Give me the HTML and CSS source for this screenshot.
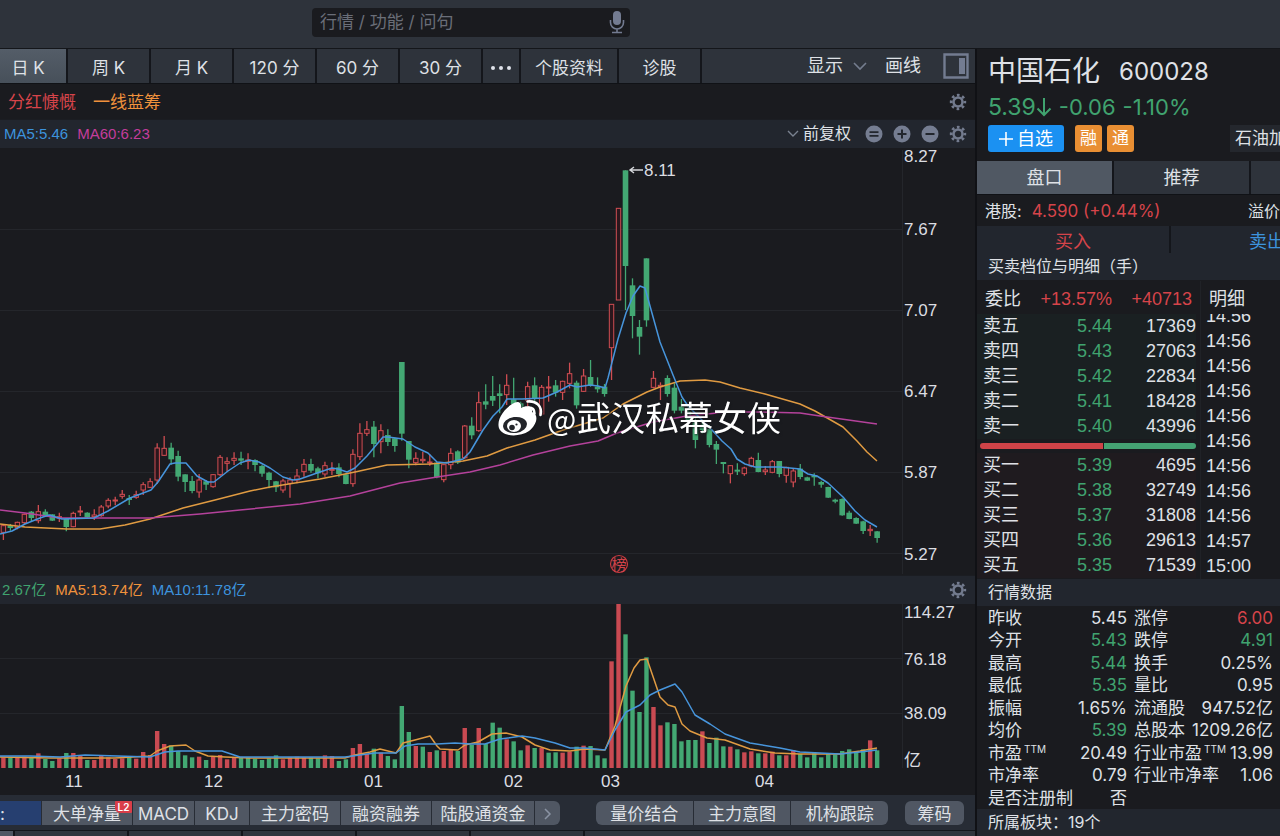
FILE: index.html
```html
<!DOCTYPE html>
<html lang="zh-CN">
<head>
<meta charset="utf-8">
<title>中国石化 600028</title>
<link rel="stylesheet" href="styles.css">
</head>
<body>
<svg class="defs" width="0" height="0" aria-hidden="true">
  <symbol id="gear" viewBox="0 0 20 20">
    <circle cx="10" cy="10" r="5" fill="none" stroke="currentColor" stroke-width="2.8"/>
    <circle cx="10" cy="10" r="7.6" fill="none" stroke="currentColor" stroke-width="3" stroke-dasharray="2.9 3.07" stroke-dashoffset="1.45"/>
  </symbol>
</svg>
<header class="topbar">
  <label class="search">
    <input type="text" placeholder="行情 / 功能 / 问句" aria-label="搜索">
    <svg class="mic" viewBox="0 0 16 24" aria-hidden="true"><rect x="4" y="1" width="8" height="14" rx="4" fill="#737b91"/><path d="M1.500 10v2.500a6.500 6.500 0 0 0 13 0V10M8 19v3M3 22.500h10" fill="none" stroke="#737b91" stroke-width="1.600"/></svg>
  </label>
</header>
<div class="app">
  <main class="main">
    <nav class="toolbar">
      <button class="tool first on">日 K</button>
      <button class="tool">周 K</button>
      <button class="tool">月 K</button>
      <button class="tool">120 分</button>
      <button class="tool">60 分</button>
      <button class="tool">30 分</button>
      <button class="tool dots" aria-label="更多"><svg width="22" height="6" viewBox="0 0 22 6"><g fill="#dfe3ea"><circle cx="3" cy="3" r="2"/><circle cx="11" cy="3" r="2"/><circle cx="19" cy="3" r="2"/></g></svg></button>
      <button class="tool wide">个股资料</button>
      <button class="tool">诊股</button>
      <div class="toolright">
        <button class="plain">显示 <svg width="14" height="9" viewBox="0 0 14 9"><path d="M1 1l6 6 6-6" fill="none" stroke="#747d8e" stroke-width="1.600"/></svg></button>
        <button class="plain">画线</button>
        <button class="plain" aria-label="侧栏"><svg width="26" height="26" viewBox="0 0 26 26"><path d="M1.500 1.500h23v23h-23z" fill="none" stroke="#737c91" stroke-width="2.400"/><path d="M16 5h6v16h-6z" fill="#737c91"/></svg></button>
      </div>
    </nav>
    <div class="tags"><span class="up">分红慷慨</span><span class="orange">一线蓝筹</span><svg class="gear"><use href="#gear"/></svg></div>
    <div class="indicator">
      <span class="blue">MA5:5.46</span><span class="pink">MA60:6.23</span>
      <div class="adjust">
        <button class="plain small"><svg width="12" height="8" viewBox="0 0 12 8"><path d="M1 1l5 5 5-5" fill="none" stroke="#7a8290" stroke-width="1.400"/></svg>前复权</button>
        <svg class="round" viewBox="0 0 18 18"><circle cx="9" cy="9" r="8.500" fill="#757d91"/><path d="M4.500 7.200h9M4.500 10.800h9" stroke="#22262d" stroke-width="1.700"/></svg>
        <svg class="round" viewBox="0 0 18 18"><circle cx="9" cy="9" r="8.500" fill="#757d91"/><path d="M4.500 9h9M9 4.500v9" stroke="#22262d" stroke-width="2"/></svg>
        <svg class="round" viewBox="0 0 18 18"><circle cx="9" cy="9" r="8.500" fill="#757d91"/><path d="M4.500 9h9" stroke="#22262d" stroke-width="2"/></svg>
        <svg class="gear"><use href="#gear"/></svg>
      </div>
    </div>
    <svg class="chart" viewBox="0 148 975 427" role="img" aria-label="日K线图">
      <path class="grid" d="M0 229.500H902M0 310.500H902M0 391.500H902M0 472.500H902M0 553.500H902M902.500 150V574"/>
      <g id="candles"></g>
      <polyline class="line-orange" points="0,524 25,527 67,529 100,529 125,525 150,519 183,508 215,500 250,491 270,487 320,479 355,472 387,465 430,464 463,461 487,456 507,448 535,440 563,430 603,418 623,404 647,392 660,387 680,381 705,380 720,382 740,388 765,394 800,404 815,411 843,427 857,441 867,452 877,461"/>
      <polyline class="line-pink" points="0,510 25,513 60,518 150,518 200,514 240,510 300,504 350,496 400,483 437,477 470,472 500,465 533,455 570,446 598,441 617,433 653,422 687,416 727,412 760,412 800,413 820,416 877,424"/>
      <polyline class="line-blue" points="0,534 12,531 25,524 40,518 49,515 62,519 94,518 108,511 130,498 151,490 158,482 170,464 175,463 186,463 197,476 208,482 214,482 228,471 240,463 249,460 259,462 270,468 283,477 293,480 300,479 317,473 332,468 338,469 347,472 355,468 367,456 383,437 388,437 403,439 415,447 428,453 437,462 447,463 463,459 470,452 483,430 493,416 502,407 507,399 522,399 543,398 557,392 570,385 577,387 590,385 598,386 605,388 608,378 618,339 626,313 633,296 640,286 645,288 650,306 660,342 673,375 682,397 688,406 700,418 712,430 722,441 731,449 737,459 745,464 755,467 780,467 800,469 808,474 817,476 828,483 843,497 855,511 865,520 877,527"/>
      <g class="axis">
        <text x="904" y="162">8.27</text><text x="904" y="235">7.67</text><text x="904" y="316">7.07</text>
        <text x="904" y="397">6.47</text><text x="904" y="478">5.87</text><text x="904" y="560">5.27</text>
        <text x="644" y="176">8.11</text>
      </g>
      <path d="M630 170H643M634 167l-4 3 4 3" fill="none" stroke="#d6d8dc" stroke-width="1.400"/>
      <circle cx="619" cy="564" r="8.500" fill="none" stroke="#c93b41" stroke-width="1.200"/>
      <text class="rank" x="619" y="570">榜</text>
      <g class="mark">
        <path d="M512 404c6-4 10-2 9 4 6-3 12-2 11 4 8 3 4 14-3 19-9 6-24 6-29-1-5-8 3-20 12-26z" fill="#fff"/>
        <ellipse cx="515" cy="425" rx="12" ry="8" fill="#23252a" transform="rotate(-8 515 425)"/>
        <ellipse cx="514" cy="426" rx="7" ry="6" fill="#fff"/>
        <circle cx="512" cy="427.500" r="2.800" fill="#23252a"/><circle cx="516.500" cy="424.500" r="1.100" fill="#23252a"/>
        <path d="M527.500 401.500c9-1 15 5 13 13.500M528.500 407.500c4 0 6 2 6 6" fill="none" stroke="#fff" stroke-width="2.600" stroke-linecap="round"/>
        <text x="547" y="431"><tspan class="at">@</tspan><tspan x="577">武汉私幕女侠</tspan></text>
      </g>
    </svg>
    <div class="indicator volume-head"><span class="down">2.67亿</span><span class="orange">MA5:13.74亿</span><span class="blue">MA10:11.78亿</span><svg class="gear"><use href="#gear"/></svg></div>
    <svg class="chart" viewBox="0 604 975 191" role="img" aria-label="成交量">
      <path class="grid" d="M0 658.500H902M0 713.500H902M902.500 604V768"/>
      <g id="volumes"></g>
      <polyline class="line-orange" points="0,757 50,758 115,758 150,756 157,751 170,746 186,745 195,751 208,756 225,757 250,758 345,758 355,755 370,752 380,749 396,753 403,743 415,740 430,736 437,746 440,749 458,750 465,745 478,742 492,734 506,733 522,737 535,745 550,750 570,751 585,749 605,750 615,726 626,686 634,668 640,660 647,659 660,697 668,705 675,707 682,724 690,731 707,738 725,740 750,749 775,753 800,754 840,754 860,751 877,748"/>
      <polyline class="line-blue" points="0,756 30,756 60,757 85,755 150,757 165,752 178,751 222,751 240,757 345,757 375,753 396,753 405,746 418,744 437,744 455,743 470,744 485,744 500,739 522,736 535,738 555,743 570,748 585,748 605,750 615,730 626,712 640,705 650,695 660,690 675,684 682,692 695,715 710,724 725,734 750,743 780,748 800,752 840,754 860,752 877,750"/>
      <g class="axis">
        <text x="904" y="618">114.27</text><text x="904" y="665">76.18</text><text x="904" y="719">38.09</text><text x="904" y="766">亿</text>
        <text x="65" y="787">11</text><text x="204" y="787">12</text><text x="364" y="787">01</text><text x="504" y="787">02</text><text x="601" y="787">03</text><text x="755" y="787">04</text>
      </g>
    </svg>
    <nav class="tabs">
      <div class="group left">
        <button class="tab active" aria-label="成交量">:</button>
        <button class="tab w4">大单净量<span class="badge">L2</span></button>
        <button class="tab macd">MACD</button>
        <button class="tab kdj">KDJ</button>
        <button class="tab w4">主力密码</button>
        <button class="tab w4">融资融券</button>
        <button class="tab w5">陆股通资金</button>
        <button class="tab next" aria-label="下一页"><svg width="8" height="12" viewBox="0 0 8 12"><path d="M1 1l5 5-5 5" fill="none" stroke="#8a93a3" stroke-width="1.500"/></svg></button>
      </div>
      <div class="group right">
        <button class="tab">量价结合</button><button class="tab">主力意图</button><button class="tab">机构跟踪</button>
      </div>
      <div class="group chips"><button class="tab">筹码</button></div>
    </nav>
    <div class="strip"><i></i><i></i><i></i><i></i><i></i><i></i><i></i></div>
  </main>
  <aside class="side">
    <div class="title"><h1>中国石化</h1><span>600028</span></div>
    <div class="price down"><span class="last">5.39<svg width="16" height="20" viewBox="0 0 16 20"><path d="M8 1v17M1.500 11.500L8 18l6.500-6.500" fill="none" stroke="currentColor" stroke-width="2"/></svg></span><span>-0.06</span><span>-1.10%</span></div>
    <div class="badges"><button class="add"><svg width="14" height="14" viewBox="0 0 14 14"><path d="M0 7h14M7 0v14" stroke="#fff" stroke-width="1.600"/></svg>自选</button><span class="chip">融</span><span class="chip">通</span><a class="sector" href="#">石油加工</a></div>
    <div class="sidetabs"><button class="on">盘口</button><button>推荐</button><button aria-label="更多"></button></div>
    <div class="hk"><span>港股:</span><span class="up">4.590 (+0.44%)</span><span class="premium">溢价</span></div>
    <div class="trade"><button class="up">买入</button><button class="blue">卖出</button></div>
    <h2 class="section">买卖档位与明细（手）</h2>
    <div class="book">
      <div class="levels">
        <div class="ratio"><span>委比</span><span class="up">+13.57%</span><span class="up">+40713</span></div>
        <table class="asks">
          <tr><th>卖五</th><td>5.44</td><td>17369</td></tr>
          <tr><th>卖四</th><td>5.43</td><td>27063</td></tr>
          <tr><th>卖三</th><td>5.42</td><td>22834</td></tr>
          <tr><th>卖二</th><td>5.41</td><td>18428</td></tr>
          <tr><th>卖一</th><td>5.40</td><td>43996</td></tr>
        </table>
        <div class="balance"><i class="b"></i><i class="s"></i></div>
        <table class="bids">
          <tr><th>买一</th><td>5.39</td><td>4695</td></tr>
          <tr><th>买二</th><td>5.38</td><td>32749</td></tr>
          <tr><th>买三</th><td>5.37</td><td>31808</td></tr>
          <tr><th>买四</th><td>5.36</td><td>29613</td></tr>
          <tr><th>买五</th><td>5.35</td><td>71539</td></tr>
        </table>
      </div>
      <div class="detail">
        <div class="ratio">明细</div>
        <ul class="times"><li>14:56</li><li>14:56</li><li>14:56</li><li>14:56</li><li>14:56</li><li>14:56</li><li>14:56</li><li>14:56</li><li>14:56</li><li>14:57</li><li>15:00</li></ul>
      </div>
    </div>
    <h2 class="section">行情数据</h2>
    <dl class="data">
      <div><dt>昨收</dt><dd>5.45</dd></div><div><dt>涨停</dt><dd class="up">6.00</dd></div>
      <div><dt>今开</dt><dd class="down">5.43</dd></div><div><dt>跌停</dt><dd class="down">4.91</dd></div>
      <div><dt>最高</dt><dd class="down">5.44</dd></div><div><dt>换手</dt><dd>0.25%</dd></div>
      <div><dt>最低</dt><dd class="down">5.35</dd></div><div><dt>量比</dt><dd>0.95</dd></div>
      <div><dt>振幅</dt><dd>1.65%</dd></div><div><dt>流通股</dt><dd>947.52亿</dd></div>
      <div><dt>均价</dt><dd class="down">5.39</dd></div><div><dt>总股本</dt><dd>1209.26亿</dd></div>
      <div><dt>市盈<sup>TTM</sup></dt><dd>20.49</dd></div><div><dt>行业市盈<sup>TTM</sup></dt><dd>13.99</dd></div>
      <div><dt>市净率</dt><dd>0.79</dd></div><div><dt>行业市净率</dt><dd>1.06</dd></div>
      <div><dt>是否注册制</dt><dd>否</dd></div>
    </dl>
    <h2 class="section">所属板块：19个</h2>
  </aside>
</div>
<script src="chart.js"></script>
</body>
</html>
```
FILE: styles.css
```css
* { box-sizing: border-box; }
body { margin: 0; overflow-x: hidden; background: #1a1b1f; color: #dfe1e6; font: 17px/24px Inter, "Noto Sans CJK SC", sans-serif; }
button { margin: 0; padding: 0; border: 0; background: none; color: inherit; font: inherit; white-space: nowrap; }
h1, h2, dl, dd, ul { margin: 0; padding: 0; font-weight: 400; list-style: none; }
svg { display: block; flex: none; }
.defs { position: absolute; }
.up { color: #d6444a; }
.down { color: #40a36f; }
.blue { color: #3d93dd; }
.orange { color: #f0923c; }
.pink { color: #c43d9c; }

.topbar { height: 49px; padding: 8px 0 0 312px; background: #2e333b; border-bottom: 1px solid #14161a; }
.search { display: flex; align-items: center; width: 318px; height: 29px; padding: 0 5px 2px 8px; border-radius: 4px; background: #1a1b1f; }
.search input { flex: 1; min-width: 0; padding: 0; border: 0; outline: 0; background: none; color: #dfe1e6; font: inherit; }
.search input::placeholder { color: #6a6e78; }
.mic { width: 16px; height: 24px; }

.app { display: grid; grid-template-columns: minmax(0, 1fr) 305px; }
.main { min-width: 0; }
.toolbar { display: flex; height: 35px; background: #2e333b; border-bottom: 1px solid #101216; }
.tool { flex: none; width: 83px; border-right: 2px solid #14161b; padding-top: 4px; }
.tool.first { width: 68px; padding-right: 10px; }
.tool.on { background: linear-gradient(#545d68, #47505a); }
.tool.dots { display: flex; align-items: center; justify-content: center; width: 38px; }
.tool.wide { width: 98px; }
.toolright { display: flex; align-items: center; gap: 18px; margin-left: auto; padding-right: 6px; }
.plain { display: flex; align-items: center; gap: 10px; font-size: 18px; }
.plain:last-child { margin-left: 4px; }
.plain.small { gap: 4px; margin-right: 4px; font-size: 16px; }
.gear { width: 18px; height: 18px; margin-left: auto; color: #737b8e; }
.tags { display: flex; align-items: center; gap: 17px; height: 35px; padding: 0 8px; }
.indicator { display: flex; align-items: center; gap: 9px; height: 29px; padding: 0 8px 0 4px; background: #22262e; border-top: 1px solid #1b1d22; font: 15px/24px "Liberation Sans", "Noto Sans CJK SC", sans-serif; }
.volume-head { padding-left: 2px; }
.adjust { display: flex; align-items: center; gap: 10px; margin-left: auto; }
.round { width: 18px; height: 18px; }

.chart { width: 100%; height: auto; }
.grid { fill: none; stroke: #24262b; }
.axis { fill: #dcdee2; font: 17px "Liberation Sans", "Noto Sans CJK SC", sans-serif; }
.rank { fill: #d1434a; font: 15px "Noto Sans CJK SC", sans-serif; text-anchor: middle; }
.mark { filter: drop-shadow(1px 1px 1px #15161a); }
.mark text { fill: #fff; font: 34px "Noto Sans CJK SC", sans-serif; }
.mark .at { font-size: 31px; }
.line-blue, .line-orange, .line-pink { fill: none; stroke-width: 1.5; stroke-linejoin: round; }
.line-blue { stroke: #4795dc; }
.line-orange { stroke: #e09b42; }
.line-pink { stroke: #b4429b; }
.red-body { fill: #2b171d; stroke: #cf4d52; }
.red-bar { fill: #c94a52; }
.green-body { fill: #43a873; }
.red-wick { stroke: #cf4d52; stroke-width: 1.3; }
.green-wick { stroke: #43a873; stroke-width: 1.3; }

.tabs { display: flex; height: 36px; padding: 6px 11px 5px 0; background: #272c35; border-bottom: 1px solid #14161b; }
.group { display: flex; gap: 1px; }
.group.left { flex: none; width: 560px; margin-right: 36px; }
.group.right { width: 292px; margin-right: 17px; }
.group.chips { width: 59px; margin-left: auto; }
.tab { display: flex; align-items: center; justify-content: center; flex: 1; padding-top: 2px; background: #505763; }
.group.left .tab { position: relative; flex: none; width: 90px; }
.group.left .active { width: 41px; background: #263f70; justify-content: flex-start; }
.group.left .macd { width: 61px; }
.group.left .kdj { width: 54px; }
.group.left .w5 { width: 102px; }
.group.left .next { flex: 1; border-radius: 0 6px 6px 0; }
.right .tab:first-child { border-radius: 6px 0 0 6px; }
.right .tab:last-child { border-radius: 0 6px 6px 0; }
.chips .tab { border-radius: 6px; }
.badge { position: absolute; top: 0; right: 0; width: 17px; height: 12px; border-radius: 1px 1px 1px 5px; background: #d93e49; color: #fff; font-size: 10px; font-weight: 600; line-height: 12px; }
.strip { display: flex; gap: 2px; height: 5px; background: #14161b; }
.strip i { width: 112px; background: #30353d; }
.strip i:first-child { width: 13px; background: #505763; }
.strip i:last-child { flex: 1; }

.side { display: flex; flex-direction: column; overflow: hidden; border-left: 2px solid #101115; white-space: nowrap; }
.title { display: flex; align-items: center; gap: 19px; height: 41px; padding: 2px 0 0 11px; }
.title h1 { font-size: 28px; line-height: 36px; }
.title span { padding-top: 3px; font-size: 24px; }
.price { display: flex; align-items: center; gap: 7px; height: 32px; padding: 2px 0 0 11px; font-size: 22px; }
.price .last { display: flex; align-items: center; font-size: 23px; }
.badges { display: flex; height: 39px; padding: 3px 0 9px 11px; }
.add { display: flex; flex: none; align-items: center; justify-content: center; gap: 4px; width: 76px; margin-right: 11px; padding-top: 1px; border-radius: 3px; background: #1b91f2; color: #fff; font-size: 18px; }
.chip { flex: none; width: 27px; margin-right: 5px; border-radius: 3px; background: #e98f33; color: #fff; text-align: center; line-height: 27px; }
.sector { flex: none; margin-left: 91px; padding-left: 5px; background: #24272d; color: inherit; text-decoration: none; line-height: 27px; }
.sidetabs { display: flex; gap: 2px; height: 34px; background: #14161b; border-bottom: 1px solid #101216; }
.sidetabs button { flex: 0 0 135px; background: #2e333b; font-size: 18px; }
.sidetabs .on { background: #505863; }
.hk { display: flex; align-items: center; gap: 10px; height: 31px; padding-left: 8px; font-size: 16px; }
.hk .up { font-size: 17px; }
.hk .premium { margin-left: auto; }
.trade { display: flex; gap: 2px; height: 27px; background: #14161b; }
.trade button { flex: 0 0 192px; padding-top: 4px; background: #22262e; font-size: 18px; }
.section { flex: none; height: 27px; padding-left: 11px; background: #22262e; font-size: 16px; line-height: 26px; }
.book { display: grid; grid-template-columns: 224px 1fr; height: 299px; padding-top: 1px; font: 18px/25px "Liberation Sans", "Noto Sans CJK SC", sans-serif; }
.levels { padding-right: 4px; border-right: 1px solid #202227; }
.ratio { display: flex; align-items: center; justify-content: space-between; height: 33px; padding: 4px 4px 0 8px; }
.levels table { width: 100%; border-spacing: 0; table-layout: fixed; }
.levels th { width: 60px; padding: 0 0 0 6px; font-weight: 400; text-align: left; }
.levels td { padding: 0; color: #40a36f; text-align: right; height: 25px; }
.levels td:last-child { width: 84px; color: #dfe1e6; }
.asks { background: #1a2022; }
.bids { background: #1f1b1f; }
.balance { display: flex; gap: 1px; height: 14px; padding: 4px 0 4px 3px; }
.balance i { background: #45a273; border-radius: 0 3px 3px 0; flex: 43; }
.balance .b { flex: 57; background: #d04348; border-radius: 3px 0 0 3px; }
.times { display: flex; flex-direction: column; justify-content: flex-end; height: 265px; overflow: hidden; padding-left: 5px; }
.times li { flex: none; height: 25px; }
.data { display: grid; grid-template-columns: 139px 139px; column-gap: 7px; flex: 1; padding: 1px 0 0 11px; line-height: 22px; }
.data div { display: flex; justify-content: space-between; }
.data sup { margin-left: 2px; font-size: 10px; line-height: 1px; vertical-align: 6px; }
```
FILE: chart.js
```js
// Each candle: colour, high, open/close top, open/close bottom, low.
// Values are thirds of a unit measured from the base of their block.
const blocks = [
  { base: 400, rows: `r375,377,397,420 g372,376,384,392 r365,367,383,388 r341,343,368,374 g333,335,354,365 r315,335,362,370 g328,335,345,350 g343,343,362,363 r338,350,354,366 g355,357,381,394 r335,340,380,382 r318,333,336,348 g337,338,352,354 r328,345,350,360 r315,321,347,350 r295,301,318,325 r290,300,302,316 r270,283,289,296 g285,294,298,315 r272,284,292,296 r247,254,270,285 r235,245,262,264 r130,144,240,252 r108,145,166,168 g128,143,178,194 g152,168,230,244 g223,223,246,276 g228,243,273,280 r222,240,276,293 g240,244,254,270 r222,224,260,263 r165,172,224,228 r172,185,190,215 r157,175,181,195 g155,175,182,195 r160,180,184,208 g178,180,195,214 g195,198,221,230 g215,218,240,265 g243,244,262,276 r236,243,270,278 r232,240,250,293 r207,228,240,250 r177,193,215,230 g176,192,212,218 g200,205,220,235` },
  { base: 340, rows: `r365,377,402,410 r367,388,391,405 g370,382,402,412 g400,403,432,433 r328,343,431,440 r250,280,350,360 r243,269,280,288 g243,260,312,352 r253,272,305,340 g268,285,306,318 g293,295,318,335 g66,66,281,302 g303,303,359,385 r337,355,368,376 r335,358,362,370 r343,366,369,377 g367,368,412,415 r373,374,419,427 r325,340,374,388 g331,334,368,372 r255,258,353,358 g232,257,286,298 r155,188,272,275 g133,184,194,208 g108,168,182,198 g133,160,168,220 r103,136,164,195 g113,178,192,210 g185,190,215,245 r125,140,180,200 g112,136,177,185 r135,142,222,224 r108,141,144,185 g120,136,158,170 r122,124,157,180 r68,101,130,145 g122,128,196,206 r87,108,154,156 g60,111,135,140 g112,140,148,158` },
  { base: 150, rows: `g702,710,732,740 r463,463,593,690 r175,175,450,450 g61,61,348,480 g385,406,498,565 g510,531,560,614 g325,325,511,530 r663,685,712,715 r697,706,710,750 g676,684,732,740 g700,713,782,790` },
  { base: 350, rows: `g147,170,182,190 g165,185,210,225 g205,215,270,295 g210,225,240,250 g225,237,285,292 g273,282,299,342 g336,336,339,370 r345,347,371,400 g340,359,364,375 r350,354,371,377 r320,325,348,352 g308,330,366,367 r348,360,365,375 r330,335,367,370 g333,333,372,382 r350,352,376,398 r355,363,396,412 g342,356,381,388 g380,382,392,393 g370,376,382,407 g392,396,404,413 g410,411,443,444 g446,449,453,460 g445,447,496,497 g482,488,507,508 g502,504,521,522 g512,514,543,552 r525,538,542,558 g543,544,564,578` }
];
const volumes = `r562 g562 r564 r560 g562 r550 g567 g573 r565 g549 r549 r556 g570 r570 r558 r562 r567 r565 g560 r566 r546 r555 r483 r522 g527 g543 g556 g562 r560 g570 r560 r555 r568 r562 g562 g562 g566 g570 g565 g556 r568 r562 r560 r562 g562 g565 r556 r558 g573 g568 r534 r522 r552 g536 r548 g558 g568 g408 g486 r528 g530 r546 g541 r543 r540 g543 r474 g525 r474 g522 g458 g473 r508 g514 g541 r526 g534 r534 g548 g547 r548 r545 g530 r527 g528 g556 g565 r274 r100 g193 g362 g426 g262 r411 r466 g457 g462 g514 g510 g510 r484 g519 g503 g529 r530 g538 r547 r544 g550 r550 r545 g556 r556 r540 g552 g562 g549 g562 g552 g553 g543 g538 g546 g538 r511 g541`.split(' ');

const xAt = i => 3.4 + 6.99 * i;

function add(parent, tag, attrs) {
  const el = document.createElementNS('http://www.w3.org/2000/svg', tag);
  for (const key in attrs) el.setAttribute(key, attrs[key]);
  parent.appendChild(el);
}

const candleLayer = document.getElementById('candles');
let index = 0;
for (const block of blocks) {
  for (const row of block.rows.split(' ')) {
    const [high, top, bottom, low] = row.slice(1).split(',').map(v => block.base + v / 3);
    const x = xAt(index++);
    const red = row[0] === 'r';
    add(candleLayer, 'line', { class: red ? 'red-wick' : 'green-wick', x1: x, x2: x, y1: high, y2: low });
    if (red) add(candleLayer, 'rect', { class: 'red-body', x: x - 2.2, y: top, width: 4.4, height: Math.max(bottom - top, 1) });
    else add(candleLayer, 'rect', { class: 'green-body', x: x - 2.8, y: top, width: 5.6, height: Math.max(bottom - top, 2) });
  }
}

const volumeLayer = document.getElementById('volumes');
volumes.forEach((v, i) => {
  const y = 570 + v.slice(1) / 3;
  add(volumeLayer, 'rect', { class: v[0] === 'r' ? 'red-bar' : 'green-body', x: xAt(i) - 2.2, y, width: 4.4, height: 768 - y });
});
```
